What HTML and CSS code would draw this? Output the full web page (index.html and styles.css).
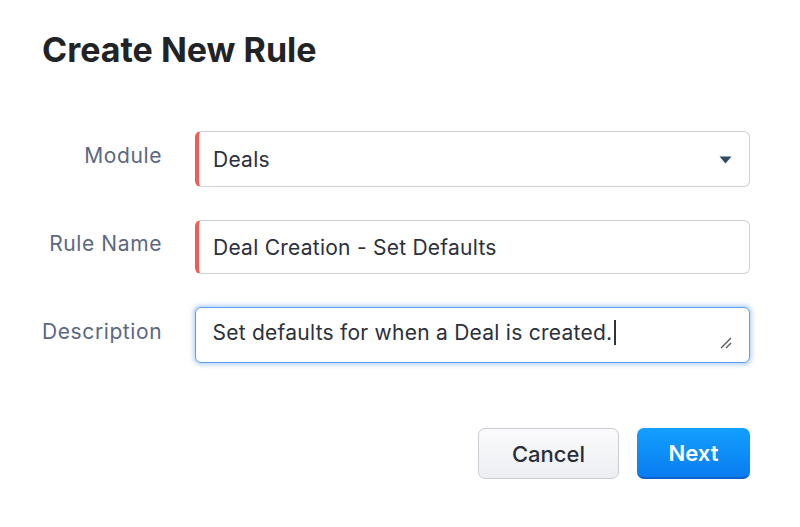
FILE: index.html
```html
<!DOCTYPE html>
<html>
<head>
<meta charset="utf-8">
<link rel="stylesheet" href="styles.css">
</head>
<body>
<div class="dialog">
  <h1 class="title">Create New Rule</h1>
  <div class="form">
    <div class="label">Module</div>
    <div class="field required select">
      <span class="value">Deals</span>
      <svg class="caret" width="13" height="8" viewBox="0 0 13 8"><path d="M0.5 0.5 H12.5 L6.5 7.5 Z" fill="#2f4a63"/></svg>
    </div>
    <div class="label">Rule Name</div>
    <div class="field required">
      <span class="value">Deal Creation - Set Defaults</span>
    </div>
    <div class="label">Description</div>
    <div class="field focused">
      <span class="value">Set defaults for when a Deal is created.<span class="cursor"></span></span>
      <svg class="grip" width="12" height="12" viewBox="0 0 12 12"><path d="M1 11 L11 1 M6 11 L11 6" stroke="#555" stroke-width="1.3" fill="none"/></svg>
    </div>
  </div>
  <div class="actions">
    <button class="btn cancel">Cancel</button>
    <button class="btn next">Next</button>
  </div>
</div>
</body>
</html>
```
FILE: styles.css
```css
html, body {
  margin: 0;
  padding: 0;
  background: #ffffff;
}
body {
  font-family: Inter, "Noto Sans", "Liberation Sans", sans-serif;
  width: 800px;
  height: 527px;
  overflow: hidden;
}
.dialog {
  padding: 28px 50px 0 42px;
}
.title {
  margin: 0;
  font-size: 34px;
  font-weight: 700;
  line-height: 44px;
  color: #222326;
  letter-spacing: 0;
}
.form {
  margin-top: 59px;
  display: grid;
  grid-template-columns: 120px 555px;
  column-gap: 33px;
  row-gap: 33px;
  align-items: center;
}
.label {
  text-align: right;
  font-size: 21px;
  letter-spacing: 0.6px;
  color: #5b6880;
  line-height: 24px;
  position: relative;
  top: -3px;
}
.field {
  height: 54px;
  box-sizing: border-box;
  border: 1px solid #cdd0d5;
  border-radius: 6px;
  background: #fff;
  display: flex;
  align-items: center;
  padding: 0 17px;
  font-size: 21px;
  letter-spacing: 0.25px;
  color: #2b303b;
  position: relative;
}
.field.required {
  border-left: 4px solid #f45b55;
  padding-left: 14px;
}
.field.select {
  height: 56px;
}
.value {
  flex: 1;
  white-space: nowrap;
}
.caret {
  margin-top: 1px;
}
.field.focused {
  height: 56px;
  border: 1.5px solid #5c9ff0;
  box-shadow: 0 0 4px 2px rgba(98, 160, 250, 0.45);
  align-items: flex-start;
  padding-top: 12px;
  padding-left: 16.5px;
}
.cursor {
  display: inline-block;
  width: 1.5px;
  height: 25px;
  background: #333;
  vertical-align: -5px;
  margin-left: 2px;
}
.grip {
  position: absolute;
  right: 17px;
  bottom: 13px;
}
.actions {
  display: flex;
  justify-content: flex-end;
  gap: 18px;
  margin-top: 65px;
  width: 708px;
}
.btn {
  height: 51px;
  border-radius: 7px;
  font-family: Inter, "Noto Sans", "Liberation Sans", sans-serif;
  font-size: 22px;
  font-weight: 500;
  cursor: pointer;
}
.cancel {
  width: 141px;
  background: linear-gradient(#fbfbfc, #eceef2);
  border: 1.5px solid #cacdd3;
  color: #2a2e38;
}
.next {
  width: 113px;
  background: linear-gradient(#12a0ff, #0a7cf0);
  border: none;
  border-bottom: 2px solid #0863cc;
  color: #ffffff;
  font-weight: 600;
}
```
